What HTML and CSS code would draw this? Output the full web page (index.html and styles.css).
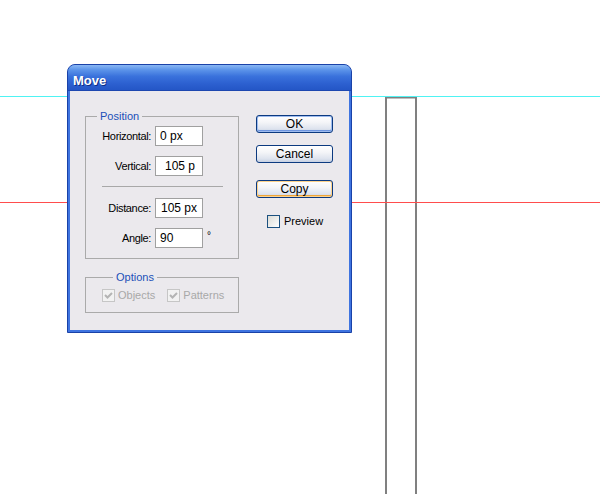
FILE: index.html
```html
<!DOCTYPE html>
<html lang="en">
<head>
  <meta charset="UTF-8" />
  <title>Move</title>
  <link rel="stylesheet" href="styles.css">
</head>
<body>
  <div class="canvas">
    <svg class="guides" width="600" height="494" viewBox="0 0 600 494">
      <path d="M386 494 V97.5 H416 V494" fill="none" stroke="#808080" stroke-width="2" />
      <line x1="0" y1="96.5" x2="600" y2="96.5" stroke="#4ff3f3" stroke-width="1" />
      <line x1="0" y1="202.5" x2="600" y2="202.5" stroke="#ff4d4d" stroke-width="1" />
    </svg>

    <div class="dialog">
      <div class="titlebar">Move</div>
      <div class="dialog-body">
        <div class="groups">
          <fieldset class="group group-position">
            <legend>Position</legend>
            <div class="field"><span class="field-label">Horizontal:</span><div class="input">0 px</div></div>
            <div class="field"><span class="field-label">Vertical:</span><div class="input input-scrolled">105 p</div></div>
            <div class="separator"></div>
            <div class="field field-tight"><span class="field-label">Distance:</span><div class="input input-full">105 px</div></div>
            <div class="field"><span class="field-label">Angle:</span><div class="input">90</div><span class="unit">°</span></div>
          </fieldset>

          <fieldset class="group group-options">
            <legend>Options</legend>
            <div class="checks">
              <span class="check check-disabled"><span class="box"><svg width="11" height="11" viewBox="0 0 11 11"><path d="M2 5 L4.5 7.5 L9 3" fill="none" stroke="#b4b4b4" stroke-width="2" /></svg></span>Objects</span>
              <span class="check check-disabled"><span class="box"><svg width="11" height="11" viewBox="0 0 11 11"><path d="M2 5 L4.5 7.5 L9 3" fill="none" stroke="#b4b4b4" stroke-width="2" /></svg></span>Patterns</span>
            </div>
          </fieldset>
        </div>

        <div class="actions">
          <button class="btn btn-default">OK</button>
          <button class="btn btn-cancel">Cancel</button>
          <button class="btn btn-hot">Copy</button>
          <span class="check check-preview"><span class="box"></span>Preview</span>
        </div>
      </div>
    </div>
  </div>
</body>
</html>
```

FILE: styles.css
```css
* {
  box-sizing: border-box;
}

body {
  margin: 0;
  background: #fff;
  font-family: 'Liberation Sans', Arial, sans-serif;
  font-size: 11px;
  color: #000;
}

.canvas {
  position: relative;
  width: 600px;
  height: 494px;
  overflow: hidden;
  background: #fff;
}

.guides {
  position: absolute;
  left: 0;
  top: 0;
}

/* window */
.dialog {
  position: absolute;
  left: 67px;
  top: 64px;
  width: 285px;
  height: 269px;
  display: flex;
  flex-direction: column;
  border: 1px solid #1a42a8;
  border-radius: 8px 8px 0 0;
  background: #3f74e0;
  padding: 0 2px 2px;
}

.titlebar {
  height: 26px;
  margin: 0 -2px;
  padding: 8px 0 0 5px;
  border-radius: 7px 7px 0 0;
  background: linear-gradient(#8ab8f4 0%, #5e96ea 18%, #3a72dc 45%, #2c60d0 75%, #2456c6 100%);
  border-bottom: 1px solid #1d47b0;
  color: #fff;
  font-size: 13px;
  font-weight: bold;
  line-height: 15px;
  text-shadow: 1px 1px 0 #0e2f86;
}

.dialog-body {
  flex: 1;
  display: flex;
  background: #ebe9ed;
  padding-left: 15px;
}

.groups {
  width: 154px;
  padding-top: 19px;
}

.group {
  margin: 0;
  padding: 0;
  border: 1px solid #aaaaaa;
  min-width: 0;
}

.group legend {
  margin-left: 11px;
  padding: 0 3px;
  line-height: 13px;
  color: #2150b8;
}

.group-position {
  padding: 3px 0 10px;
}

.group-options {
  margin-top: 12px;
  padding: 5px 0 10px 16px;
}

.field {
  display: flex;
  align-items: center;
  margin-top: 10px;
}

.field:first-of-type {
  margin-top: 0;
}

.field-tight {
  margin-top: 11px;
}

.field-label {
  width: 65px;
  margin-right: 4px;
  text-align: right;
  letter-spacing: -0.35px;
}

.input {
  width: 48px;
  height: 20px;
  line-height: 18px;
  padding-left: 4px;
  border: 1px solid #a0a0a0;
  background: #fff;
  font-size: 12px;
  white-space: nowrap;
  overflow: hidden;
}

.input-full {
  padding-left: 5px;
}

.input-scrolled {
  padding-left: 9px;
}

.unit {
  align-self: flex-start;
  margin-left: 4px;
  margin-top: 2px;
  font-size: 10px;
}

.separator {
  height: 1px;
  margin: 10px 15px 0 16px;
  background: #a8a8a8;
}

.checks {
  display: flex;
  align-items: center;
}

.check {
  display: flex;
  align-items: center;
  line-height: 13px;
}

.check .box {
  width: 13px;
  height: 13px;
  margin-right: 3px;
  display: flex;
  align-items: center;
  justify-content: center;
}

.check-disabled {
  color: #a8a8a8;
  margin-right: 12px;
}

.check-disabled .box {
  border: 1px solid #c6c6c6;
  background: #f2f2f2;
}

/* buttons */
.actions {
  display: flex;
  flex-direction: column;
  align-items: flex-start;
  margin-left: 17px;
  padding-top: 24px;
}

.btn {
  width: 77px;
  height: 18px;
  padding: 0;
  border: 1px solid #0c3a80;
  border-radius: 3px;
  background: linear-gradient(#ffffff 0%, #f4f5f8 40%, #dde3ee 80%, #c6d0e2 100%);
  font-family: inherit;
  font-size: 12px;
  line-height: 15px;
  color: #000;
}

.btn-default {
  box-shadow: inset 0 0 0 1px #9fbcef, inset 0 -1px 0 1px #6f96e0;
}

.btn-cancel {
  margin-top: 12px;
}

.btn-hot {
  margin-top: 17px;
  box-shadow: inset 0 0 0 1px #fcd28c, inset 0 -1px 0 1px #eda53a;
}

.check-preview {
  margin: 17px 0 0 11px;
  font-size: 11px;
}

.check-preview .box {
  margin-right: 4px;
  border: 1px solid #1c5180;
  background: linear-gradient(135deg, #dcdcd6, #ffffff);
}
```
